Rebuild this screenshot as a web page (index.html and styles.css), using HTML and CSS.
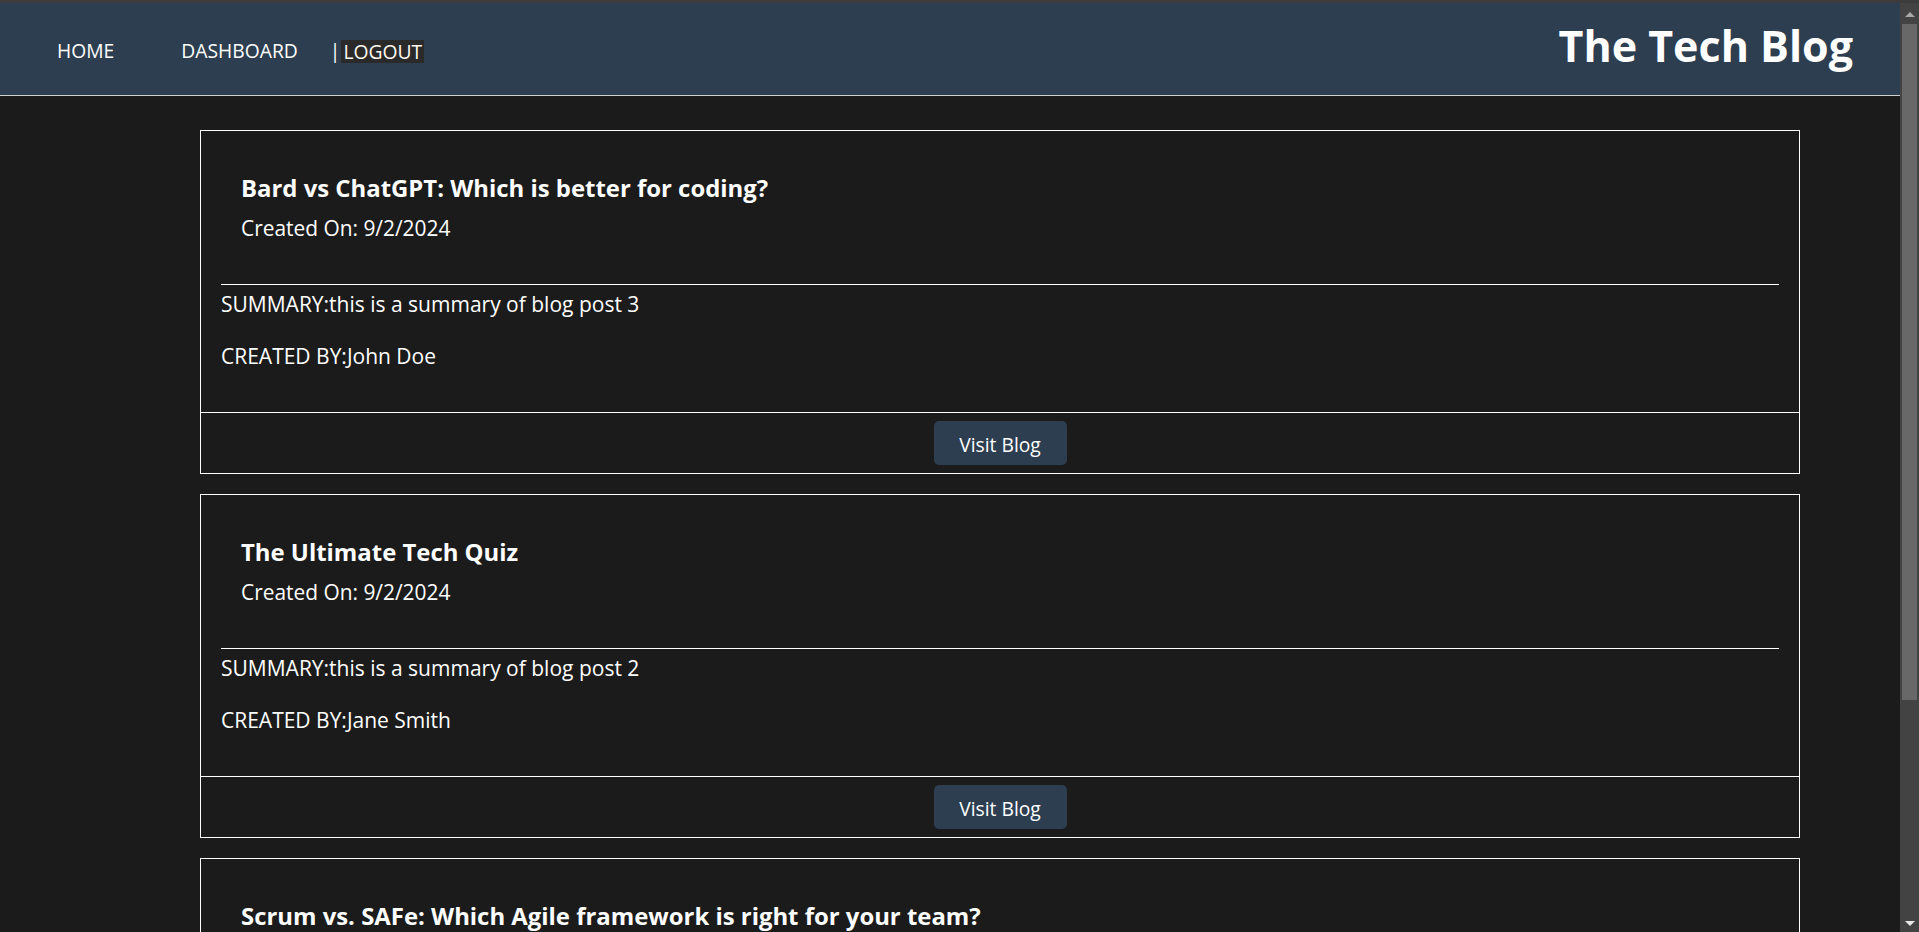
FILE: index.html
```html
<!DOCTYPE html>
<html lang="en">
<head>
<meta charset="utf-8">
<title>The Tech Blog</title>
<link rel="stylesheet" href="styles.css">
</head>
<body>
<header class="site-header">
  <nav class="nav">
    <a class="nav-link nav-home" href="#">HOME</a>
    <a class="nav-link nav-dash" href="#">DASHBOARD</a>
    <span class="nav-sep">|</span><button class="logout">LOGOUT</button>
  </nav>
  <h1 class="site-title">The Tech Blog</h1>
</header>
<main class="posts">
  <article class="card">
    <div class="card-body">
      <div class="post-head">
        <h2 class="post-title">Bard vs ChatGPT: Which is better for coding?</h2>
        <p class="post-date">Created On: 9/2/2024</p>
      </div>
      <hr class="rule">
      <p class="summary">SUMMARY:this is a summary of blog post 3</p>
      <p class="author">CREATED BY:John Doe</p>
    </div>
    <div class="card-footer"><button class="visit">Visit Blog</button></div>
  </article>
  <article class="card">
    <div class="card-body">
      <div class="post-head">
        <h2 class="post-title">The Ultimate Tech Quiz</h2>
        <p class="post-date">Created On: 9/2/2024</p>
      </div>
      <hr class="rule">
      <p class="summary">SUMMARY:this is a summary of blog post 2</p>
      <p class="author">CREATED BY:Jane Smith</p>
    </div>
    <div class="card-footer"><button class="visit">Visit Blog</button></div>
  </article>
  <article class="card">
    <div class="card-body">
      <div class="post-head">
        <h2 class="post-title">Scrum vs. SAFe: Which Agile framework is right for your team?</h2>
        <p class="post-date">Created On: 9/2/2024</p>
      </div>
      <hr class="rule">
      <p class="summary">SUMMARY:this is a summary of blog post 1</p>
      <p class="author">CREATED BY:John Doe</p>
    </div>
    <div class="card-footer"><button class="visit">Visit Blog</button></div>
  </article>
</main>
<div class="scrollbar" aria-hidden="true">
  <span class="sb-arrow sb-up"></span>
  <span class="sb-thumb"></span>
  <span class="sb-arrow sb-down"></span>
</div>
</body>
</html>
```

FILE: styles.css
```css
html {
  background: #1b1b1b;
}

body {
  margin: 0;
  padding-right: 19px;
  background: #1b1b1b;
  color: #ffffff;
  font-family: "Open Sans", "Noto Sans", sans-serif;
  border-top: 3px solid #3c3c3c;
}

.site-header {
  display: flex;
  justify-content: space-between;
  align-items: flex-start;
  height: 92px;
  background: #2d3e50;
  border-bottom: 1px solid #cfcfcf;
  padding: 0 47px 0 57px;
}

.nav {
  display: flex;
  align-items: center;
  padding-top: 35px;
  font-size: 19.3px;
  line-height: 26px;
}

.nav-link {
  color: #ffffff;
  text-decoration: none;
}
.nav-home { margin-right: 67px; }
.nav-dash { margin-right: 32px; }
.nav-sep { margin-right: 1px; }

.logout {
  font: inherit;
  color: #fffaf0;
  background: #2a2a2a;
  border: 0;
  padding: 0 2px;
  height: 23px;
  line-height: 23px;
  cursor: pointer;
}

.site-title {
  margin: 15px 0 0;
  font-size: 43px;
  line-height: 56px;
  font-weight: 700;
}

.posts {
  padding: 34px 0 20px 200px;
}

.card {
  width: 1600px;
  box-sizing: border-box;
  border: 1px solid #ffffff;
  margin-bottom: 20px;
}

.card-body {
  padding: 20px 20px 42px;
}

.post-head {
  padding: 23px 20px 43px;
}

.post-title {
  margin: 0;
  font-size: 23.9px;
  line-height: 28px;
  font-weight: 700;
}

.post-date {
  margin: 13px 0 0;
  font-size: 20.9px;
  line-height: 26px;
}

.rule {
  margin: 0;
  border: 0;
  border-top: 1px solid #ffffff;
}

.summary {
  margin: 6px 0 0;
  font-size: 21px;
  line-height: 27px;
}

.author {
  margin: 25px 0 0;
  font-size: 21px;
  line-height: 27px;
}

.card-footer {
  border-top: 1px solid #ffffff;
  padding: 8px 0;
  display: flex;
  justify-content: center;
}

.visit {
  width: 133px;
  height: 44px;
  padding: 2px 0 0;
  border: 0;
  border-radius: 5px;
  background: #2d3e50;
  color: #ffffff;
  font-family: inherit;
  font-size: 19.3px;
  cursor: pointer;
}

.scrollbar {
  position: fixed;
  top: 3px;
  right: 0;
  bottom: 0;
  width: 19px;
  background: #434343;
  display: flex;
  flex-direction: column;
  align-items: center;
}

.sb-arrow {
  width: 0;
  height: 0;
  border-left: 5px solid transparent;
  border-right: 5px solid transparent;
}

.sb-up {
  margin-top: 9px;
  border-bottom: 5px solid #a8a8a8;
}

.sb-thumb {
  margin-top: 7px;
  width: 15px;
  height: 676px;
  background: #686868;
}

.sb-down {
  margin-top: auto;
  margin-bottom: 6px;
  border-top: 5px solid #e8e8e8;
}
```
